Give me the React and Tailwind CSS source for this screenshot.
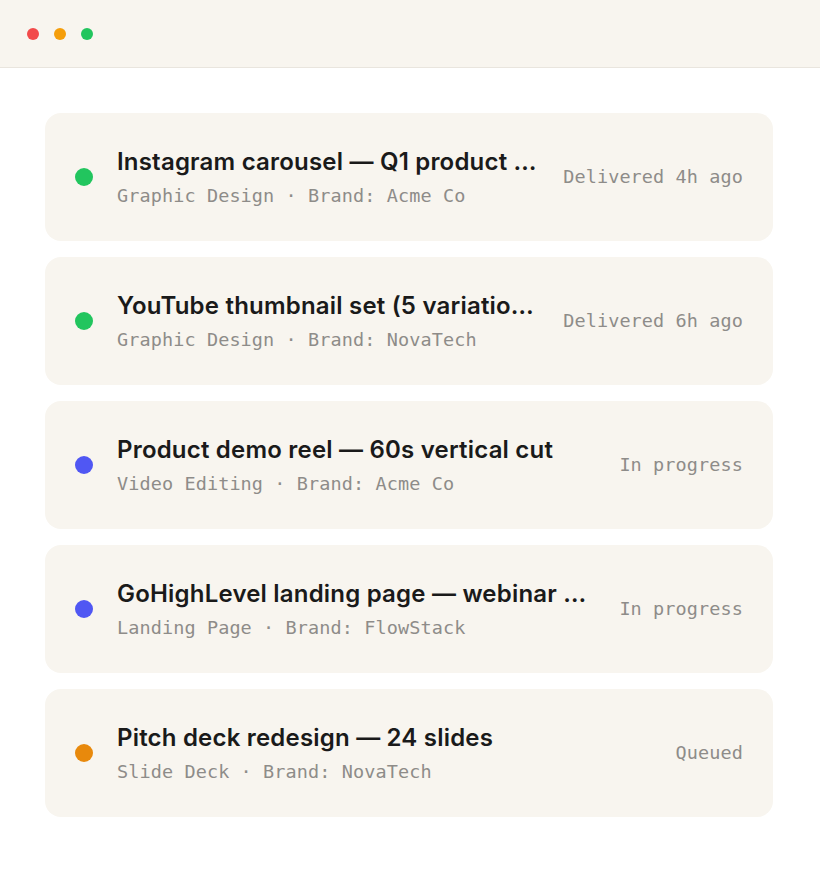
import React from "react";

const items = [
  { title: "Instagram carousel — Q1 product launch", sub: "Graphic Design · Brand: Acme Co", status: "Delivered 4h ago", dot: "bg-[#22c55e]" },
  { title: "YouTube thumbnail set (5 variations)", sub: "Graphic Design · Brand: NovaTech", status: "Delivered 6h ago", dot: "bg-[#22c55e]" },
  { title: "Product demo reel — 60s vertical cut", sub: "Video Editing · Brand: Acme Co", status: "In progress", dot: "bg-[#5057f3]" },
  { title: "GoHighLevel landing page — webinar funnel", sub: "Landing Page · Brand: FlowStack", status: "In progress", dot: "bg-[#5057f3]" },
  { title: "Pitch deck redesign — 24 slides", sub: "Slide Deck · Brand: NovaTech", status: "Queued", dot: "bg-[#e8890c]" },
];

export default function App() {
  return (
    <div className="w-[820px] h-[880px] bg-white overflow-hidden">
      <div className="h-[68px] bg-[#f8f5ef] border-b border-[#e9e5de] flex items-center gap-[15px] pl-[27px]">
        <span className="w-3 h-3 rounded-full bg-[#f24a4a]" />
        <span className="w-3 h-3 rounded-full bg-[#f59e0b]" />
        <span className="w-3 h-3 rounded-full bg-[#22c55e]" />
      </div>
      <div className="flex flex-col gap-4 pl-[45px] pr-[47px] pt-[45px]">
        {items.map((it, i) => (
          <div key={i} className="h-[128px] rounded-2xl bg-[#f8f5ef] flex items-center pl-[30px] pr-[30px]">
            <span className={`w-[18px] h-[18px] rounded-full shrink-0 ${it.dot}`} />
            <div className="flex-1 min-w-0 ml-6 mr-[26px]">
              <div className="truncate text-[24px] leading-[30px] font-semibold text-[#1a1a1a] tracking-[0.2px]" style={{ fontFamily: "Inter, 'Noto Sans', sans-serif" }}>
                {it.title}
              </div>
              <div className="mt-[7px] text-[18.5px] leading-[24px] text-[#8e8c89] whitespace-nowrap tracking-[0.1px]" style={{ fontFamily: "'DejaVu Sans Mono', 'Liberation Mono', monospace" }}>
                {it.sub}
              </div>
            </div>
            <div className="shrink-0 text-[18.5px] leading-[24px] text-[#8e8c89] whitespace-nowrap tracking-[0.1px]" style={{ fontFamily: "'DejaVu Sans Mono', 'Liberation Mono', monospace" }}>
              {it.status}
            </div>
          </div>
        ))}
      </div>
    </div>
  );
}
